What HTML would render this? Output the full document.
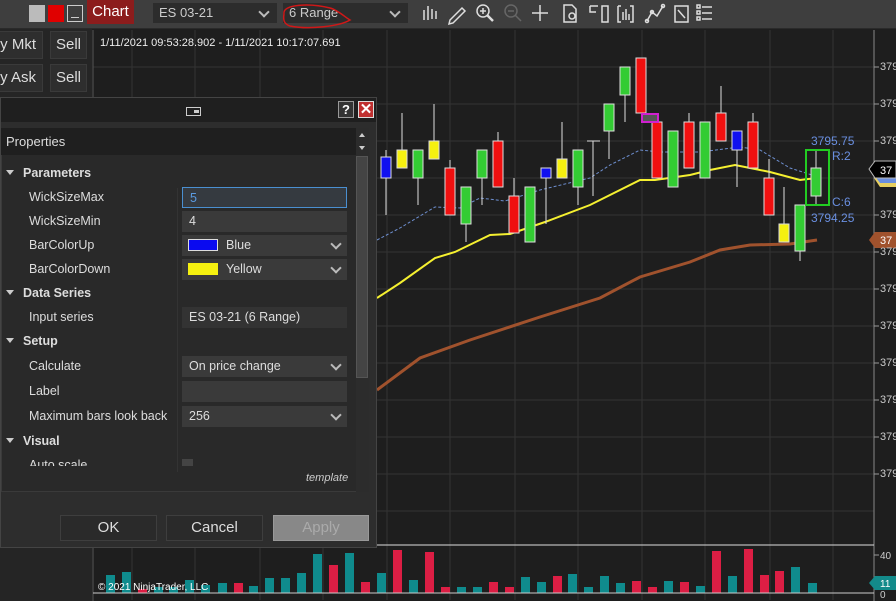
<!DOCTYPE html>
<html><head><meta charset="utf-8"><style>
*{margin:0;padding:0;box-sizing:border-box}
body{width:896px;height:601px;overflow:hidden;background:#1e1e1e;font-family:"Liberation Sans",sans-serif;position:relative;color:#ddd}
.abs{position:absolute}
.tb{left:0;top:0;width:896px;height:29px;background:#3e3e3e;border-bottom:1px solid #2a2a2a}
.dd{background:#2c2c2c;color:#ccc;font-size:13px;height:20px;top:3px;line-height:20px;padding-left:6px}
.dd:after{content:"";position:absolute;right:9px;top:5px;width:6px;height:6px;border-right:2px solid #bbb;border-bottom:2px solid #bbb;transform:rotate(45deg)}
.lb{background:#2e2e2e;border:1px solid #3a3a3a;color:#ddd;font-size:15px;line-height:26px;height:28px;white-space:nowrap;overflow:hidden}
.dlg{left:0;top:97px;width:377px;height:451px;background:#2d2d2d;border:1px solid #444}
.row{position:absolute;left:29px;font-size:12.5px;color:#ddd;white-space:nowrap}
.cat{position:absolute;left:6px;font-size:12.5px;font-weight:bold;color:#ddd}
.cat:before{content:"";display:inline-block;border-left:4px solid transparent;border-right:4px solid transparent;border-top:5px solid #ccc;margin-right:9px;vertical-align:2px}
.val{position:absolute;left:182px;width:165px;height:21px;background:#3a3a3a;font-size:12.5px;color:#ddd;line-height:21px;padding-left:7px}
.val.d:after{content:"";position:absolute;right:7px;top:5px;width:6px;height:6px;border-right:2px solid #bbb;border-bottom:2px solid #bbb;transform:rotate(45deg)}
.btn{position:absolute;top:515px;height:26px;background:#2a2a2a;border:1px solid #3e3e3e;font-size:15px;color:#ddd;text-align:center;line-height:24px}
.px{position:absolute;left:880px;font-size:11px;color:#ccc;white-space:nowrap}
</style></head><body>

<svg class="abs" style="left:0;top:0" width="896" height="601">
<g stroke="#343434" stroke-width="1">
<line x1="93" y1="67" x2="874" y2="67"/><line x1="93" y1="104" x2="874" y2="104"/><line x1="93" y1="141" x2="874" y2="141"/><line x1="93" y1="178" x2="874" y2="178"/><line x1="93" y1="215" x2="874" y2="215"/><line x1="93" y1="252" x2="874" y2="252"/><line x1="93" y1="289" x2="874" y2="289"/><line x1="93" y1="326" x2="874" y2="326"/><line x1="93" y1="363" x2="874" y2="363"/><line x1="93" y1="400" x2="874" y2="400"/><line x1="93" y1="437" x2="874" y2="437"/><line x1="93" y1="474" x2="874" y2="474"/><line x1="93" y1="511" x2="874" y2="511"/>
<line x1="132" y1="30" x2="132" y2="600"/><line x1="195" y1="30" x2="195" y2="600"/><line x1="260" y1="30" x2="260" y2="600"/><line x1="323" y1="30" x2="323" y2="600"/><line x1="387" y1="30" x2="387" y2="600"/><line x1="450" y1="30" x2="450" y2="600"/><line x1="515" y1="30" x2="515" y2="600"/><line x1="578" y1="30" x2="578" y2="600"/><line x1="642" y1="30" x2="642" y2="600"/><line x1="705" y1="30" x2="705" y2="600"/><line x1="770" y1="30" x2="770" y2="600"/><line x1="833" y1="30" x2="833" y2="600"/>
</g>
<line x1="93" y1="30" x2="93" y2="601" stroke="#555"/>
<line x1="874" y1="30" x2="874" y2="601" stroke="#888"/>
<line x1="93" y1="545" x2="874" y2="545" stroke="#ddd"/>
<g stroke="#999"><line x1="874" y1="67" x2="879" y2="67"/><line x1="874" y1="104" x2="879" y2="104"/><line x1="874" y1="141" x2="879" y2="141"/><line x1="874" y1="215" x2="879" y2="215"/><line x1="874" y1="252" x2="879" y2="252"/><line x1="874" y1="289" x2="879" y2="289"/><line x1="874" y1="326" x2="879" y2="326"/><line x1="874" y1="363" x2="879" y2="363"/><line x1="874" y1="400" x2="879" y2="400"/><line x1="874" y1="437" x2="879" y2="437"/><line x1="874" y1="474" x2="879" y2="474"/></g>

<polyline fill="none" stroke="#a0522d" stroke-width="3" points="377,390 420,358 470,340 540,317 600,298 640,277 690,262 720,250 750,245 790,244 817,240"/>
<polyline fill="none" stroke="#6e8fd0" stroke-width="1" stroke-dasharray="3,2" points="377,240 400,228 435,207 460,208 480,198 505,201 540,190 590,178 610,165 640,150 660,152 700,152 740,147 760,150 790,168 815,176"/>
<polyline fill="none" stroke="#f5f030" stroke-width="2" points="377,298 400,283 435,258 455,252 490,235 510,234 545,222 590,205 640,180 655,180 690,175 710,170 735,165 750,168 770,172 800,180 817,178"/>

<g stroke="#ddd" stroke-width="1">
<line x1="386" y1="150" x2="386" y2="215"/><line x1="402" y1="113" x2="402" y2="150"/><line x1="418" y1="178" x2="418" y2="205"/><line x1="434" y1="104" x2="434" y2="141"/><line x1="450" y1="160" x2="450" y2="168"/><line x1="466" y1="224" x2="466" y2="242"/><line x1="482" y1="178" x2="482" y2="205"/><line x1="498" y1="132" x2="498" y2="141"/><line x1="514" y1="178" x2="514" y2="196"/><line x1="546" y1="178" x2="546" y2="224"/><line x1="562" y1="122" x2="562" y2="159"/><line x1="578" y1="187" x2="578" y2="205"/><line x1="593" y1="141" x2="593" y2="196"/><line x1="587" y1="141" x2="600" y2="141"/><line x1="609" y1="131" x2="609" y2="159"/><line x1="625" y1="95" x2="625" y2="122"/><line x1="689" y1="113" x2="689" y2="122"/><line x1="721" y1="86" x2="721" y2="113"/><line x1="737" y1="150" x2="737" y2="187"/><line x1="753" y1="113" x2="753" y2="122"/><line x1="769" y1="159" x2="769" y2="178"/><line x1="784" y1="187" x2="784" y2="224"/><line x1="800" y1="251" x2="800" y2="261"/><line x1="816" y1="150" x2="816" y2="205"/>
</g>
<g stroke="#ddd" stroke-width="1">
<rect x="381" y="157" width="10" height="21" fill="#1010f0"/>
<rect x="397" y="150" width="10" height="18" fill="#f5f010"/>
<rect x="413" y="150" width="10" height="28" fill="#33cc33"/>
<rect x="429" y="141" width="10" height="18" fill="#f5f010"/>
<rect x="445" y="168" width="10" height="47" fill="#f01010"/>
<rect x="461" y="187" width="10" height="37" fill="#33cc33"/>
<rect x="477" y="150" width="10" height="28" fill="#33cc33"/>
<rect x="493" y="141" width="10" height="46" fill="#f01010"/>
<rect x="509" y="196" width="10" height="37" fill="#f01010"/>
<rect x="525" y="187" width="10" height="55" fill="#33cc33"/>
<rect x="541" y="168" width="10" height="10" fill="#1010f0"/>
<rect x="557" y="159" width="10" height="19" fill="#f5f010"/>
<rect x="573" y="150" width="10" height="37" fill="#33cc33"/>
<rect x="604" y="104" width="10" height="27" fill="#33cc33"/>
<rect x="620" y="67" width="10" height="28" fill="#33cc33"/>
<rect x="636" y="58" width="10" height="55" fill="#f01010"/>
<rect x="652" y="122" width="10" height="56" fill="#f01010"/>
<rect x="668" y="131" width="10" height="56" fill="#33cc33"/>
<rect x="684" y="122" width="10" height="46" fill="#f01010"/>
<rect x="700" y="122" width="10" height="56" fill="#33cc33"/>
<rect x="716" y="113" width="10" height="28" fill="#f01010"/>
<rect x="732" y="131" width="10" height="19" fill="#1010f0"/>
<rect x="748" y="122" width="10" height="46" fill="#f01010"/>
<rect x="764" y="178" width="10" height="37" fill="#f01010"/>
<rect x="779" y="224" width="10" height="18" fill="#f5f010"/>
<rect x="795" y="205" width="10" height="46" fill="#33cc33"/>
<rect x="811" y="168" width="10" height="28" fill="#33cc33"/>
</g>
<rect x="642" y="114" width="16" height="8" fill="#555" stroke="#d020d0" stroke-width="2"/>
<rect x="806" y="150" width="23" height="55" fill="none" stroke="#22cc22" stroke-width="2"/>
<g font-size="12" fill="#6a8fe0" font-family="Liberation Sans">
<text x="811" y="145">3795.75</text><text x="832" y="160">R:2</text><text x="832" y="206">C:6</text><text x="811" y="222">3794.25</text></g>

<path d="M874,178 L880,172 L896,172 L896,187 L880,187Z" fill="#e8d060"/>
<path d="M874,175 L880,169 L896,169 L896,183 L880,183Z" fill="#6a8fe0"/>
<path d="M869,169 L875,161 L896,161 L896,178 L875,178Z" fill="#000" stroke="#bbb"/>
<text x="880" y="174" font-size="11" fill="#fff">37</text>
<path d="M869,240 L875,232 L896,232 L896,248 L875,248Z" fill="#a0522d"/>
<text x="880" y="244" font-size="11" fill="#fff">37</text>
<path d="M869,583 L875,576 L896,576 L896,590 L875,590Z" fill="#138a8a"/>
<text x="880" y="587" font-size="10" fill="#fff">11</text>

<g>
<rect x="106" y="575" width="9" height="18" fill="#0f8b8d"/><rect x="122" y="572" width="9" height="21" fill="#0f8b8d"/><rect x="138" y="589" width="9" height="4" fill="#dc1e44"/><rect x="154" y="587" width="9" height="6" fill="#0f8b8d"/><rect x="169" y="587" width="9" height="6" fill="#0f8b8d"/><rect x="185" y="580" width="9" height="13" fill="#0f8b8d"/><rect x="201" y="585" width="9" height="8" fill="#0f8b8d"/><rect x="218" y="583" width="9" height="10" fill="#0f8b8d"/><rect x="234" y="583" width="9" height="10" fill="#dc1e44"/><rect x="249" y="586" width="9" height="7" fill="#0f8b8d"/><rect x="265" y="578" width="9" height="15" fill="#0f8b8d"/><rect x="281" y="578" width="9" height="15" fill="#0f8b8d"/><rect x="297" y="573" width="9" height="20" fill="#0f8b8d"/><rect x="313" y="554" width="9" height="39" fill="#0f8b8d"/><rect x="329" y="565" width="9" height="28" fill="#dc1e44"/><rect x="345" y="553" width="9" height="40" fill="#0f8b8d"/><rect x="361" y="582" width="9" height="11" fill="#dc1e44"/><rect x="377" y="573" width="9" height="20" fill="#0f8b8d"/><rect x="393" y="550" width="9" height="43" fill="#dc1e44"/><rect x="409" y="580" width="9" height="13" fill="#0f8b8d"/><rect x="425" y="552" width="9" height="41" fill="#dc1e44"/><rect x="441" y="587" width="9" height="6" fill="#dc1e44"/><rect x="457" y="587" width="9" height="6" fill="#0f8b8d"/><rect x="473" y="587" width="9" height="6" fill="#0f8b8d"/><rect x="489" y="582" width="9" height="11" fill="#dc1e44"/><rect x="505" y="587" width="9" height="6" fill="#dc1e44"/><rect x="521" y="577" width="9" height="16" fill="#0f8b8d"/><rect x="537" y="582" width="9" height="11" fill="#0f8b8d"/><rect x="553" y="576" width="9" height="17" fill="#dc1e44"/><rect x="568" y="574" width="9" height="19" fill="#0f8b8d"/><rect x="584" y="587" width="9" height="6" fill="#0f8b8d"/><rect x="600" y="576" width="9" height="17" fill="#0f8b8d"/><rect x="616" y="583" width="9" height="10" fill="#0f8b8d"/><rect x="632" y="581" width="9" height="12" fill="#dc1e44"/><rect x="648" y="587" width="9" height="6" fill="#dc1e44"/><rect x="664" y="581" width="9" height="12" fill="#0f8b8d"/><rect x="680" y="582" width="9" height="11" fill="#dc1e44"/><rect x="696" y="586" width="9" height="7" fill="#0f8b8d"/><rect x="712" y="551" width="9" height="42" fill="#dc1e44"/><rect x="728" y="576" width="9" height="17" fill="#0f8b8d"/><rect x="744" y="549" width="9" height="44" fill="#dc1e44"/><rect x="760" y="575" width="9" height="18" fill="#dc1e44"/><rect x="775" y="571" width="9" height="22" fill="#dc1e44"/><rect x="791" y="567" width="9" height="26" fill="#0f8b8d"/><rect x="808" y="583" width="9" height="10" fill="#0f8b8d"/>
</g>
<line x1="93" y1="593" x2="874" y2="593" stroke="#ccc"/>
<line x1="874" y1="555" x2="879" y2="555" stroke="#999"/>
<text x="880" y="559" font-size="10" fill="#ccc">40</text>
<text x="880" y="598" font-size="10" fill="#ccc">0</text>
<text x="98" y="590" font-size="10" fill="#fff">© 2021 NinjaTrader, LLC</text>
<text x="100" y="46" font-size="11" fill="#eee">1/11/2021 09:53:28.902 - 1/11/2021 10:17:07.691</text>
</svg>

<div class="abs" style="left:0;top:29px;width:92px;height:572px;background:#252525"></div>
<div class="abs lb" style="left:-2px;top:31px;width:45px;direction:rtl;text-align:right;padding-right:6px"><span style="direction:ltr;unicode-bidi:embed">uy Mkt</span></div>
<div class="abs lb" style="left:50px;top:31px;width:37px;text-align:center">Sell</div>
<div class="abs lb" style="left:-2px;top:64px;width:45px;direction:rtl;text-align:right;padding-right:6px"><span style="direction:ltr;unicode-bidi:embed">uy Ask</span></div>
<div class="abs lb" style="left:50px;top:64px;width:37px;text-align:center">Sell</div>

<div class="abs tb"></div>
<div class="abs" style="left:29px;top:5px;width:16px;height:17px;background:#bbb"></div>
<div class="abs" style="left:48px;top:5px;width:16px;height:17px;background:#e00000"></div>
<div class="abs" style="left:67px;top:5px;width:16px;height:17px;border:1px solid #ccc"><div style="position:absolute;left:3px;bottom:3px;width:8px;height:1px;background:#ccc"></div></div>
<div class="abs" style="left:87px;top:0;width:47px;height:24px;background:#8c1c1c;color:#fff;font-size:15px;line-height:24px;text-align:center">Chart</div>
<div class="abs dd" style="left:153px;width:124px">ES 03-21</div>
<div class="abs dd" style="left:283px;width:125px">6 Range</div>
<svg class="abs" style="left:280px;top:0" width="80" height="32"><path d="M4,14 C2,4 30,3 50,8 C58,10 66,18 70,20 C60,26 30,30 10,26 C4,24 3,20 4,14" fill="none" stroke="#d01818" stroke-width="1.5"/></svg>
<svg class="abs" style="left:418px;top:2px" width="300" height="24" stroke="#ddd" fill="none" stroke-width="1.5">
<g><line x1="6" y1="8" x2="6" y2="18"/><line x1="10" y1="4" x2="10" y2="18"/><line x1="14" y1="7" x2="14" y2="17"/><line x1="18" y1="9" x2="18" y2="17"/></g>
<path d="M32,18 L44,6 L47,9 L35,21 L31,22Z"/>
<circle cx="65" cy="9" r="6"/><line x1="69" y1="13" x2="75" y2="19" stroke-width="2.5"/><line x1="62" y1="9" x2="68" y2="9"/><line x1="65" y1="6" x2="65" y2="12"/>
<g stroke="#666"><circle cx="93" cy="9" r="6"/><line x1="97" y1="13" x2="103" y2="19"/><line x1="90" y1="9" x2="96" y2="9"/></g>
<line x1="122" y1="3" x2="122" y2="19"/><line x1="114" y1="11" x2="130" y2="11"/>
<path d="M146,3 H154 L158,7 V20 H146Z"/><circle cx="154" cy="14" r="3"/>
<path d="M172,4 H180 M172,4 V10 H178 M184,4 H190 V20 H184Z"/>
<path d="M200,4 H203 M200,4 V20 H203 M212,4 H215 V20 H212 M205,18 V10 M208,18 V7 M211,18 V12"/>
<path d="M229,19 L234,10 L239,14 L245,4"/><circle cx="229" cy="19" r="1.5"/><circle cx="234" cy="10" r="1.5"/><circle cx="245" cy="4" r="1.5"/>
<path d="M257,4 H270 V20 H257Z M260,8 L267,16"/>
<path d="M284,5 H294 M284,11 H294 M284,17 H294"/><rect x="279" y="3" width="3" height="3"/><rect x="279" y="9" width="3" height="3"/><rect x="279" y="15" width="3" height="3"/>
</svg>

<div class="px" style="top:61px">379</div><div class="px" style="top:98px">379</div><div class="px" style="top:135px">379</div><div class="px" style="top:209px">379</div><div class="px" style="top:246px">379</div><div class="px" style="top:283px">379</div><div class="px" style="top:320px">379</div><div class="px" style="top:357px">379</div><div class="px" style="top:394px">379</div><div class="px" style="top:431px">379</div><div class="px" style="top:468px">379</div>

<div class="abs dlg">
 <div style="position:absolute;left:0;top:0;width:375px;height:24px;background:#1f1f1f"></div>
 <div style="position:absolute;left:185px;top:9px;width:15px;height:9px;border:1px solid #ccc"><div style="position:absolute;right:1px;top:2px;width:5px;height:3px;background:#ccc"></div></div>
 <div style="position:absolute;left:337px;top:3px;width:16px;height:17px;border:1px solid #999;background:#333;color:#fff;font-size:13px;font-weight:bold;text-align:center;line-height:15px">?</div>
 <div style="position:absolute;left:357px;top:3px;width:16px;height:17px;background:#c03030;border:1px solid #ddd;color:#fff;font-size:15px;font-weight:bold;text-align:center;line-height:15px">✕</div>
 <div style="position:absolute;left:0;top:30px;width:368px;height:364px;background:#292929;border:1px solid #3a3a3a"></div>
 <div style="position:absolute;left:0;top:30px;width:355px;height:27px;background:#1f1f1f;font-size:13px;line-height:27px;padding-left:5px;color:#ddd">Properties</div>
 <div style="position:absolute;left:355px;top:30px;width:13px;height:364px;background:#2c2c2c"></div>
 <div style="position:absolute;left:358px;top:35px;border-left:3px solid transparent;border-right:3px solid transparent;border-bottom:4px solid #ccc"></div>
 <div style="position:absolute;left:358px;top:48px;border-left:3px solid transparent;border-right:3px solid transparent;border-top:4px solid #ccc"></div>
 <div style="position:absolute;left:355px;top:58px;width:12px;height:222px;background:#444;border:1px solid #555"></div>
 <div style="position:absolute;left:176px;top:90px;width:1px;height:284px;background:#333"></div>
</div>
<div class="cat" style="top:166px">Parameters</div>
<div class="row" style="top:190px">WickSizeMax</div>
<div class="val" style="top:187px;border:1px solid #4a8fd0;color:#5a9ae0;background:#353a40">5</div>
<div class="row" style="top:214px">WickSizeMin</div>
<div class="val" style="top:211px">4</div>
<div class="row" style="top:238px">BarColorUp</div>
<div class="val d" style="top:235px;padding-left:44px"><span style="position:absolute;left:6px;top:4px;width:30px;height:12px;background:#0a0af0;border:1px solid #ddd"></span>Blue</div>
<div class="row" style="top:262px">BarColorDown</div>
<div class="val d" style="top:259px;padding-left:44px"><span style="position:absolute;left:6px;top:4px;width:30px;height:12px;background:#f5f010"></span>Yellow</div>
<div class="cat" style="top:286px">Data Series</div>
<div class="row" style="top:310px">Input series</div>
<div class="val" style="top:307px;background:#333">ES 03-21 (6 Range)</div>
<div class="cat" style="top:334px">Setup</div>
<div class="row" style="top:359px">Calculate</div>
<div class="val d" style="top:356px">On price change</div>
<div class="row" style="top:384px">Label</div>
<div class="val" style="top:381px"></div>
<div class="row" style="top:409px">Maximum bars look back</div>
<div class="val d" style="top:406px">256</div>
<div class="cat" style="top:434px">Visual</div>
<div class="abs" style="left:0;top:457px;width:355px;height:9px;overflow:hidden"><div class="row" style="top:1px">Auto scale</div><div style="position:absolute;left:182px;top:2px;width:11px;height:9px;background:#444"></div></div>
<div class="abs" style="left:306px;top:472px;font-size:11px;font-style:italic;color:#ccc">template</div>
<div class="btn" style="left:60px;width:97px">OK</div>
<div class="btn" style="left:166px;width:97px">Cancel</div>
<div class="btn" style="left:273px;width:96px;background:#888;color:#aaa;border-color:#999">Apply</div>
</body></html>
